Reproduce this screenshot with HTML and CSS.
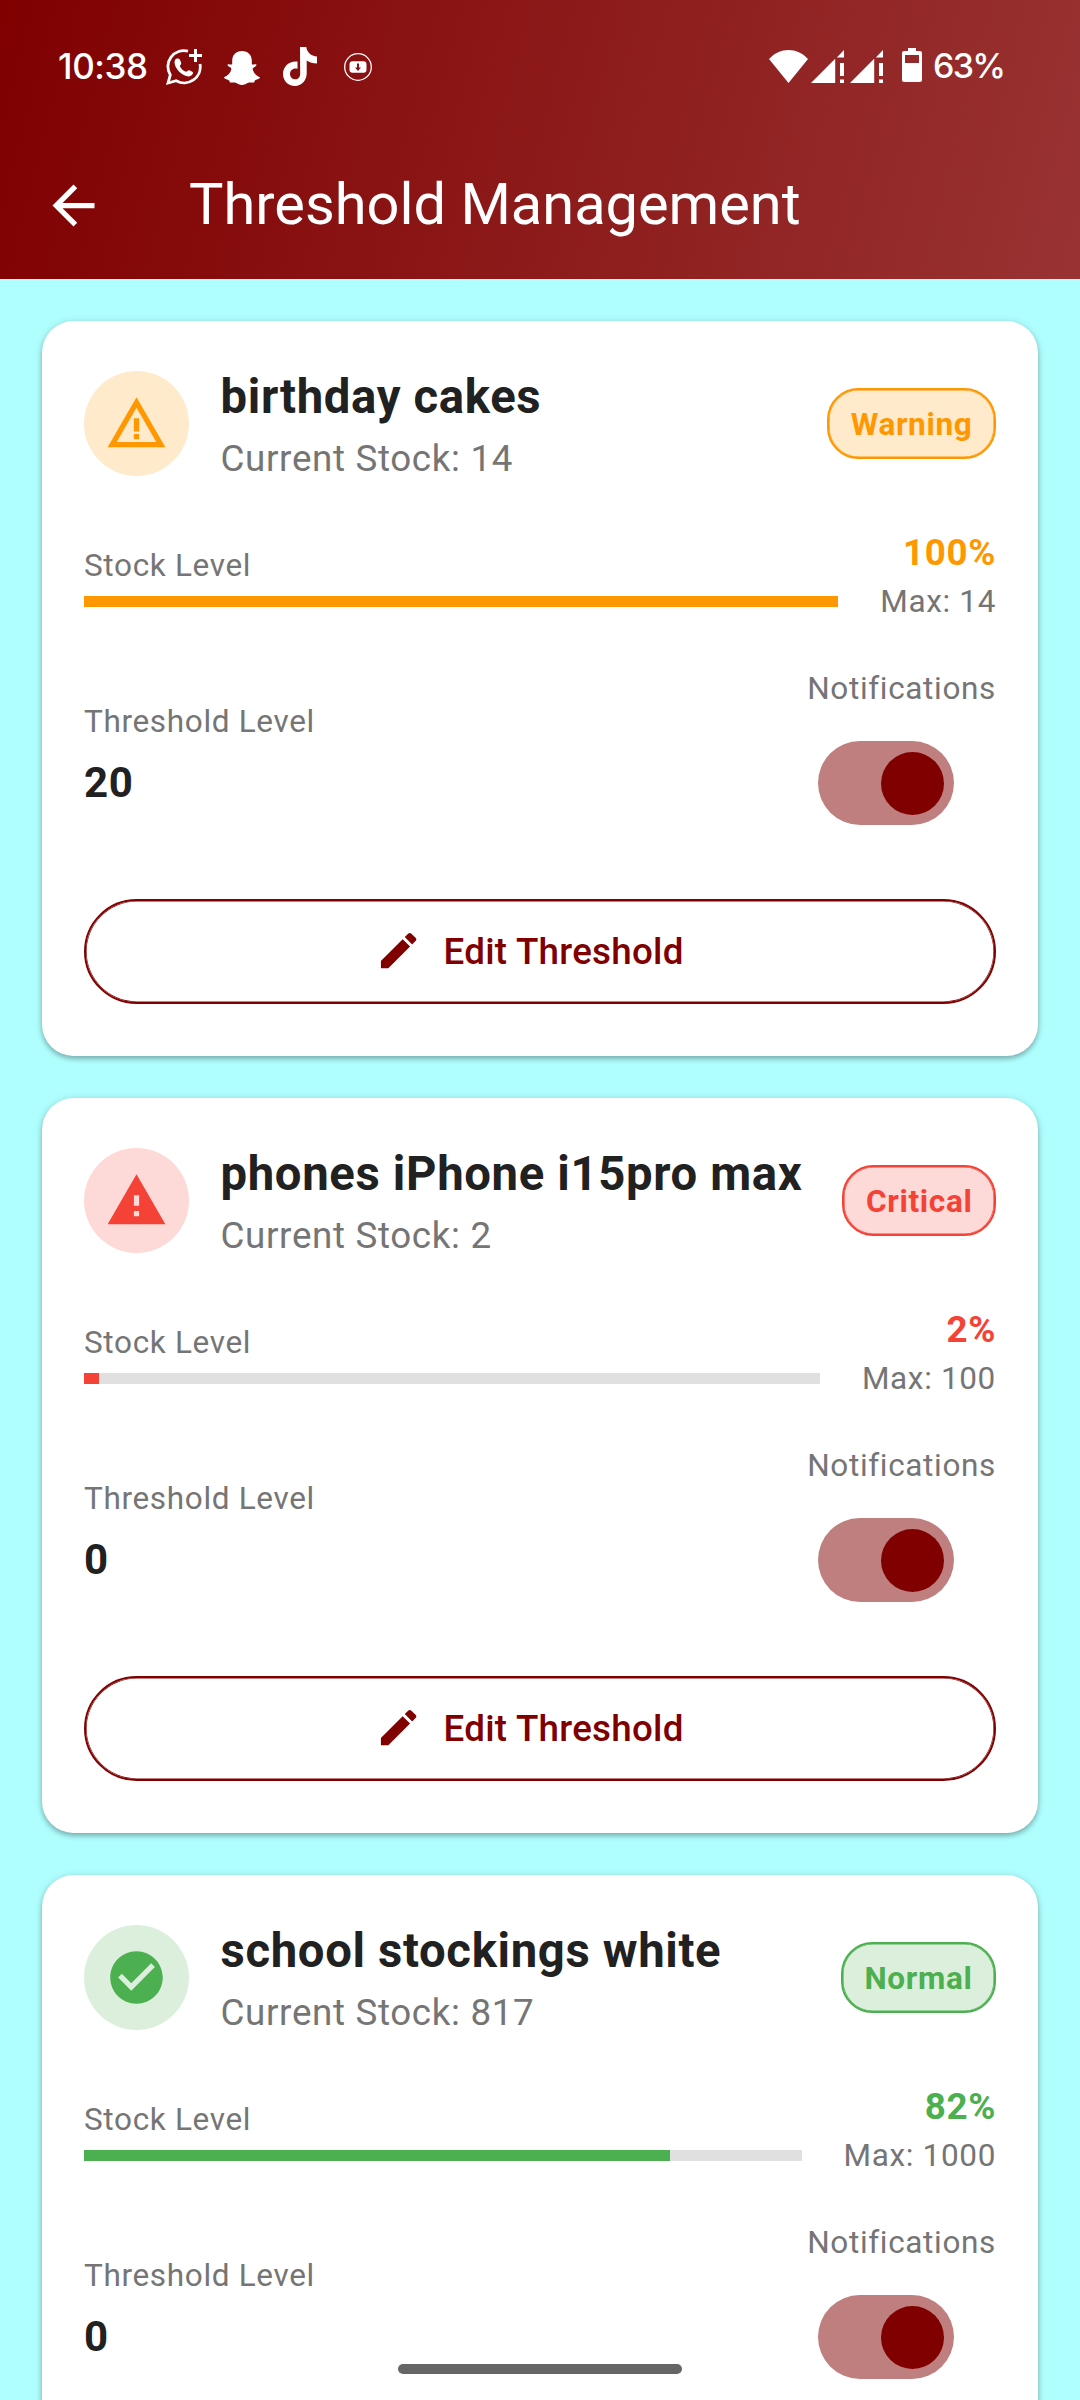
FILE: index.html
```html
<!DOCTYPE html>
<html lang="en">
<head>
<meta charset="utf-8">
<title>Threshold Management</title>
<link rel="stylesheet" href="styles.css">
</head>
<body>
<svg class="sprite" aria-hidden="true">
  <symbol id="edit" viewBox="0 0 24 24"><path d="M3 17.25V21h3.75L17.81 9.94l-3.75-3.75L3 17.25zM20.71 7.04c.39-.39.39-1.02 0-1.41l-2.34-2.34c-.39-.39-1.02-.39-1.41 0l-1.83 1.83 3.75 3.75 1.83-1.83z"/></symbol>
  <symbol id="signal" viewBox="0 0 33 33"><path d="M0 33 24.2 8.8V33zM25.8 7.5 33 0V7.5zM29 13h4v13h-4zM29 29.5h4V33h-4z"/></symbol>
</svg>
<div class="screen">
  <header class="top">
    <div class="status">
      <span class="clock">10:38</span>
      <svg class="s-wa" viewBox="0 0 36 36"><path d="M22 2.100A16 16 0 0 0 4.300 26L2 34l8.200-2.300A16 16 0 0 0 34 15" fill="none" stroke="#fff" stroke-width="2.800"/><path d="M28 0h3v5h5v3h-5v5h-3V8h-5V5h5z"/><path d="M10.300 9.800c1.600-.8 3.200-.2 3.800 1.300l1.100 2.800c.4 1.200-1.200 2.200-1.300 3 .9 2.600 3.700 5.200 6.300 5.900.9-.1 1.900-2 3.200-1.500l2.900 1.500c2 1.200-.6 4.600-3.600 4.600C16.200 27.400 8.700 19.700 8.500 13.600c0-1.600.6-3.200 1.800-3.800z"/></svg>
      <svg class="s-snap" viewBox="0 0 36 34"><path d="M18 0c6 0 9.600 4 9.800 9.300v4c1.500.8 3.400-.9 4.500.3 1 1.500-3 2.600-3.700 3.900.4 3.600 3.200 7.200 7.400 8.800-.2 2-4 2.100-5.200 3.300l-.7 1.900c-1.800.3-4.200-.4-6 .3C22.200 32.900 20.400 34 18 34s-4.200-1.100-6.100-2.200c-1.800-.7-4.200 0-6-.3l-.7-1.900C4 28.400.2 28.300 0 26.300c4.200-1.600 7-5.200 7.400-8.800C6.700 16.200 2.700 15.100 3.700 13.600c1.100-1.200 3 .5 4.500-.3v-4C8.400 4 12 0 18 0z"/></svg>
      <svg class="s-tik" viewBox="0 0 34 39"><path d="M17 0h6.300c.4 5 4.700 9.200 10.700 9.500v7c-4 0-7.500-1.200-10.300-3V26.500C23.600 34 18 39 12 39 5 39 0 33.500 0 27c0-8 6.700-13.500 14.500-12.500v7.200C10.500 20.500 7 23 7 27c0 3 2.300 5.300 5.200 5.300 3 0 5-2.300 5-5.600z"/></svg>
      <svg class="s-dl" viewBox="0 0 28 28"><circle cx="14" cy="14" r="13.300" fill="none" stroke="#fff" stroke-width="1.300"/><path fill-rule="evenodd" d="M8.500 8.300h11c2 0 3 1 3 3v5.500c0 2-1 3-3 3h-11c-2 0-3-1-3-3v-5.500c0-2 1-3 3-3zM13 10.500v4h-2l3 3.500 3-3.500h-2v-4z"/></svg>
      <svg class="s-wifi" viewBox="0 0 39 33"><path d="M19.500 33 0 9C11-3 28-3 39 9z"/></svg>
      <svg class="s-sig"><use href="#signal"/></svg>
      <svg class="s-sig"><use href="#signal"/></svg>
      <svg class="s-bat" viewBox="0 0 20 34"><path fill-rule="evenodd" d="M6 0h8v3h4q2 0 2 2v27q0 2-2 2H2q-2 0-2-2V5q0-2 2-2h4zM3 7v8h14V7z"/></svg>
      <span class="percent">63%</span>
    </div>
    <div class="bar">
      <svg class="back" viewBox="0 0 24 24"><path d="M20 11H7.830l5.590-5.590L12 4l-8 8 8 8 1.410-1.410L7.830 13H20v-2z"/></svg>
      <h1>Threshold Management</h1>
    </div>
  </header>
  <main class="list">
    <section class="card warning">
      <div class="head">
        <span class="avatar"><svg viewBox="0 0 24 24"><path d="M12 5.990L19.530 19H4.470L12 5.990M12 2L1 21h22L12 2zM13 16h-2v2h2v-2zM13 10h-2v5h2v-5z"/></svg></span>
        <div class="info"><h2>birthday cakes</h2><p>Current Stock: 14</p></div>
        <span class="badge">Warning</span>
      </div>
      <div class="stock">
        <div class="level"><span class="label">Stock Level</span><div class="track"><div class="fill" style="width:100%"></div></div></div>
        <div class="amount"><b>100%</b><span class="label">Max: 14</span></div>
      </div>
      <div class="settings">
        <div class="threshold"><span class="label">Threshold Level</span><b>20</b></div>
        <div class="notify"><span class="label">Notifications</span><span class="switch"><i></i></span></div>
      </div>
      <button class="edit"><svg><use href="#edit"/></svg><span>Edit Threshold</span></button>
    </section>
    <section class="card critical">
      <div class="head">
        <span class="avatar"><svg viewBox="0 0 24 24"><path d="M1 21h22L12 2 1 21zm12-3h-2v-2h2v2zm0-4h-2v-4h2v4z"/></svg></span>
        <div class="info"><h2>phones iPhone i15pro max</h2><p>Current Stock: 2</p></div>
        <span class="badge">Critical</span>
      </div>
      <div class="stock">
        <div class="level"><span class="label">Stock Level</span><div class="track"><div class="fill" style="width:2%"></div></div></div>
        <div class="amount"><b>2%</b><span class="label">Max: 100</span></div>
      </div>
      <div class="settings">
        <div class="threshold"><span class="label">Threshold Level</span><b>0</b></div>
        <div class="notify"><span class="label">Notifications</span><span class="switch"><i></i></span></div>
      </div>
      <button class="edit"><svg><use href="#edit"/></svg><span>Edit Threshold</span></button>
    </section>
    <section class="card normal">
      <div class="head">
        <span class="avatar"><svg viewBox="0 0 24 24"><path d="M12 2C6.480 2 2 6.480 2 12s4.480 10 10 10 10-4.480 10-10S17.520 2 12 2zm-2 15l-5-5 1.410-1.410L10 14.170l7.590-7.590L19 8l-9 9z"/></svg></span>
        <div class="info"><h2>school stockings white</h2><p>Current Stock: 817</p></div>
        <span class="badge">Normal</span>
      </div>
      <div class="stock">
        <div class="level"><span class="label">Stock Level</span><div class="track"><div class="fill" style="width:81.7%"></div></div></div>
        <div class="amount"><b>82%</b><span class="label">Max: 1000</span></div>
      </div>
      <div class="settings">
        <div class="threshold"><span class="label">Threshold Level</span><b>0</b></div>
        <div class="notify"><span class="label">Notifications</span><span class="switch"><i></i></span></div>
      </div>
    </section>
  </main>
  <div class="gesture"></div>
</div>
</body>
</html>
```
FILE: styles.css
```css
* { box-sizing: border-box; margin: 0; padding: 0; }
body { background: #b0ffff; font-family: Roboto, sans-serif; }
.sprite { display: none; }
.screen { position: relative; width: 1080px; height: 2400px; overflow: hidden; background: #b0ffff; }
svg { flex: none; fill: #fff; }

.top { height: 279px; background: linear-gradient(104.5deg, #800000, #993333); color: #fff; }
.status { display: flex; align-items: center; height: 132px; padding-left: 58px; font: 500 35px/44px Inter, sans-serif; }
.clock { width: 108px; letter-spacing: -.4px; }
.s-wa { width: 36px; height: 36px; margin-top: 2px; }
.s-snap { width: 36px; height: 34px; margin: 3px 0 0 22px; }
.s-tik { width: 34px; height: 39px; margin: 1px 0 0 23px; }
.s-dl { width: 28px; height: 28px; margin: 2px 0 0 27px; }
.s-wifi { width: 39px; height: 33px; margin-left: 397px; }
.s-sig { width: 33px; height: 33px; margin-left: 3px; }
.s-sig + .s-sig { margin-left: 6px; }
.s-bat { width: 20px; height: 34px; margin: -2px 11px 0 19px; }
.percent { font-size: 34px; letter-spacing: -1.7px; }
.bar { display: flex; align-items: center; height: 147px; padding-left: 42px; }
.back { width: 63px; height: 63px; }
h1 { margin: 0 0 3px 84px; font-size: 57.75px; font-weight: 400; line-height: 74px; }

.list { display: flex; flex-direction: column; gap: 42px; padding: 42px; }
.card { display: flex; flex-direction: column; gap: 42px; height: 735px; flex: none; padding: 42px; border-radius: 31.5px; background: #fff; box-shadow: 0 3px 5px rgba(0, 0, 0, .24), 0 1px 8px rgba(0, 0, 0, .14); }
.warning { --tone: #ff9800; --tint: #ffeacc; }
.critical { --tone: #f44336; --tint: #fdd9d7; }
.normal { --tone: #4caf50; --tint: #dbefdc; }

.head { display: flex; align-items: center; height: 121px; }
.avatar { display: flex; align-items: center; justify-content: center; width: 105px; height: 105px; border-radius: 50%; background: var(--tint); }
.avatar svg { width: 63px; height: 63px; fill: var(--tone); }
.info { flex: 1; margin-left: 31.5px; white-space: nowrap; }
h2 { font-size: 47.25px; font-weight: 700; line-height: 68px; letter-spacing: .66px; color: #212121; }
.info p { padding-top: 2px; font-size: 36.75px; line-height: 51px; letter-spacing: .66px; color: #757575; }
.badge { padding: 12px 21.6px 10px; border: 2px solid var(--tone); border-radius: 31.5px; background: var(--tint); box-shadow: inset 0 0 0 .6px var(--tone); color: var(--tone); font-size: 31.5px; font-weight: 700; line-height: 45px; letter-spacing: .66px; }

.label { padding-top: 2px; font-size: 31.5px; line-height: 43px; letter-spacing: .66px; color: #757575; }
.stock { display: flex; align-items: center; gap: 42px; height: 97px; }
.level { display: flex; flex-direction: column; gap: 9px; flex: 1; }
.track { height: 10.5px; background: #e0e0e0; }
.fill { height: 100%; background: var(--tone); }
.amount { display: flex; flex-direction: column; align-items: flex-end; }
.amount b { padding-top: 2px; font-size: 36.75px; line-height: 50px; letter-spacing: .66px; color: var(--tone); }

.settings { display: flex; align-items: center; justify-content: space-between; height: 181.5px; }
.threshold { display: flex; flex-direction: column; gap: 9px; }
.threshold .label { padding-top: 0; line-height: 45px; }
.threshold b { font-size: 42px; line-height: 60px; letter-spacing: .66px; color: #212121; }
.notify { display: flex; flex-direction: column; align-items: flex-end; height: 100%; }
.switch { display: flex; align-items: center; justify-content: flex-end; width: 136.5px; height: 84px; margin: 31px 42px 0 0; padding-right: 10.5px; border-radius: 42px; background: #bf7f7f; }
.switch i { width: 63px; height: 63px; border-radius: 50%; background: #800000; }
.edit { display: flex; align-items: center; justify-content: center; gap: 21px; height: 105px; margin-top: 10px; padding-right: 21px; border: 2px solid #800000; border-radius: 52.5px; background: none; box-shadow: inset 0 0 0 .6px #800000; color: #800000; font: 500 36.75px/50px Roboto, sans-serif; letter-spacing: .26px; }
.edit span { padding-top: 2px; }
.edit svg { width: 47.25px; height: 47.25px; fill: #800000; }

.gesture { position: absolute; left: 398px; bottom: 26px; width: 284px; height: 10px; border-radius: 5px; background: #666; }
```
